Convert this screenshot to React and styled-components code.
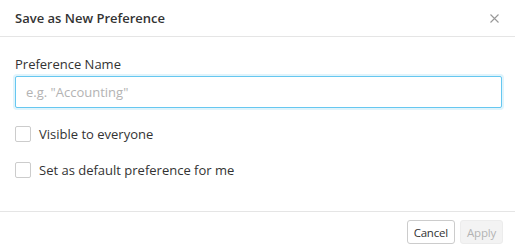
import styled, { createGlobalStyle } from "styled-components";

const GlobalStyle = createGlobalStyle`
  html, body {
    margin: 0;
    padding: 0;
    background: #ffffff;
  }
  body {
    font-family: "Open Sans", "Noto Sans", sans-serif;
    color: #333333;
  }
  * {
    box-sizing: border-box;
  }
`;

const App = () => {
  return (
    <>
      <GlobalStyle />
      <Modal>
        <Header>
          <Title>Save as New Preference</Title>
          <CloseButton aria-label="Close">
            <svg width="9" height="9" viewBox="0 0 9 9">
              <path d="M0.5 0.5 L8.5 8.5 M8.5 0.5 L0.5 8.5" stroke="#999" strokeWidth="1.1" />
            </svg>
          </CloseButton>
        </Header>
        <Body>
          <Field>
            <Label htmlFor="pref-name">Preference Name</Label>
            <Input id="pref-name" placeholder='e.g. "Accounting"' />
          </Field>
          <CheckRow>
            <Box />
            <span>Visible to everyone</span>
          </CheckRow>
          <CheckRow>
            <Box />
            <span>Set as default preference for me</span>
          </CheckRow>
        </Body>
        <Footer>
          <Button>Cancel</Button>
          <Button disabled>Apply</Button>
        </Footer>
      </Modal>
    </>
  );
};

export default App;

const Modal = styled.div`
  width: 515px;
  height: 252px;
  display: flex;
  flex-direction: column;
  background: #fff;
`;

const Header = styled.div`
  height: 37px;
  padding: 0 15px;
  display: flex;
  align-items: center;
  justify-content: space-between;
  border-bottom: 1px solid #e5e5e5;
`;

const Title = styled.h4`
  margin: 0;
  font-size: 13px;
  font-weight: 600;
  color: #333;
`;

const CloseButton = styled.button`
  border: none;
  background: none;
  padding: 0;
  margin-right: 1px;
  display: flex;
  cursor: pointer;
`;

const Body = styled.div`
  flex: 1;
  padding: 18px 13px 0 15px;
  display: flex;
  flex-direction: column;
`;

const Field = styled.div`
  display: flex;
  flex-direction: column;
  gap: 3px;
  margin-bottom: 16px;
`;

const Label = styled.label`
  font-size: 13px;
  line-height: 18px;
  color: #333;
`;

const Input = styled.input`
  height: 32px;
  padding: 0 10px;
  font-family: inherit;
  font-size: 13px;
  color: #333;
  border: 1px solid #66c7f0;
  border-radius: 2px;
  outline: none;
  box-shadow: 0 0 0 2px rgba(102, 199, 240, 0.2);
  &::placeholder {
    color: #b3b3b3;
  }
`;

const CheckRow = styled.label`
  display: flex;
  align-items: center;
  gap: 8px;
  height: 20px;
  margin-bottom: 16px;
  font-size: 13px;
  color: #333;
`;

const Box = styled.span`
  width: 16px;
  height: 16px;
  border: 1px solid #cccccc;
  border-radius: 2px;
  background: #fff;
`;

const Footer = styled.div`
  height: 41px;
  border-top: 1px solid #e5e5e5;
  display: flex;
  align-items: center;
  justify-content: flex-end;
  gap: 5px;
  padding: 0 12px 0 0;
`;

const Button = styled.button`
  height: 24px;
  padding: 0 6px;
  font-family: inherit;
  font-size: 11.5px;
  letter-spacing: -0.2px;
  color: #333;
  background: #fff;
  border: 1px solid #cccccc;
  border-radius: 3px;
  &:disabled {
    color: #b3b3b3;
    background: #f3f3f3;
    border-color: #ececec;
  }
`;
